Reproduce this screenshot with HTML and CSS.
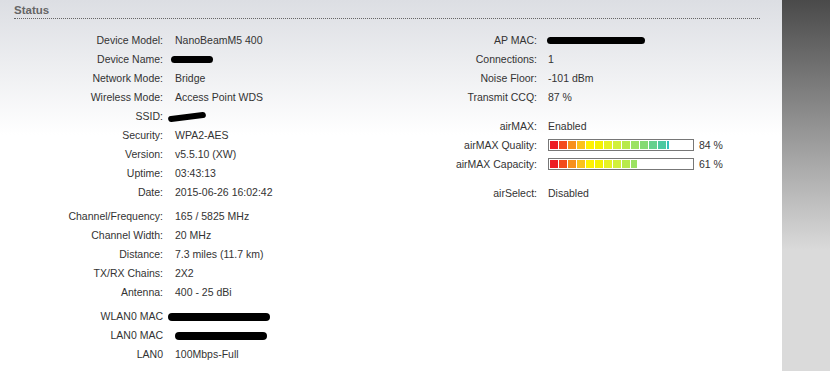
FILE: index.html
```html
<!DOCTYPE html>
<html lang="en">
<head>
<meta charset="utf-8">
<title>Status</title>
<link rel="stylesheet" href="styles.css">
</head>
<body>
<div class="page">
  <main class="main">
    <h2 class="title">Status</h2>
    <div class="cols">
      <div class="col col-left">
        <dl class="group">
          <dt>Device Model:</dt><dd>NanoBeamM5 400</dd>
          <dt>Device Name:</dt><dd><span class="redact redact-name"></span></dd>
          <dt>Network Mode:</dt><dd>Bridge</dd>
          <dt>Wireless Mode:</dt><dd>Access Point WDS</dd>
          <dt>SSID:</dt><dd><span class="redact redact-ssid"></span></dd>
          <dt>Security:</dt><dd>WPA2-AES</dd>
          <dt>Version:</dt><dd>v5.5.10 (XW)</dd>
          <dt>Uptime:</dt><dd>03:43:13</dd>
          <dt>Date:</dt><dd>2015-06-26 16:02:42</dd>
        </dl>
        <dl class="group">
          <dt>Channel/Frequency:</dt><dd>165 / 5825 MHz</dd>
          <dt>Channel Width:</dt><dd>20 MHz</dd>
          <dt>Distance:</dt><dd>7.3 miles (11.7 km)</dd>
          <dt>TX/RX Chains:</dt><dd>2X2</dd>
          <dt>Antenna:</dt><dd>400 - 25 dBi</dd>
        </dl>
        <dl class="group">
          <dt>WLAN0 MAC</dt><dd><span class="redact redact-wlan"></span></dd>
          <dt>LAN0 MAC</dt><dd><span class="redact redact-lan"></span></dd>
          <dt>LAN0</dt><dd>100Mbps-Full</dd>
        </dl>
      </div>
      <div class="col col-right">
        <dl class="group">
          <dt>AP MAC:</dt><dd><span class="redact redact-apmac"></span></dd>
          <dt>Connections:</dt><dd>1</dd>
          <dt>Noise Floor:</dt><dd>-101 dBm</dd>
          <dt>Transmit CCQ:</dt><dd>87 %</dd>
        </dl>
        <dl class="group">
          <dt>airMAX:</dt><dd>Enabled</dd>
          <dt>airMAX Quality:</dt><dd><span class="meter"><span class="meter-fill" style="width:84%"></span></span>84 %</dd>
          <dt>airMAX Capacity:</dt><dd><span class="meter"><span class="meter-fill" style="width:61%"></span></span>61 %</dd>
        </dl>
        <dl class="group">
          <dt>airSelect:</dt><dd>Disabled</dd>
        </dl>
      </div>
    </div>
  </main>
  <aside class="side"></aside>
</div>
</body>
</html>
```
FILE: styles.css
```css
html, body {
  margin: 0;
  height: 100%;
}

body {
  font-family: "Liberation Sans", Arial, sans-serif;
  font-size: 10.5px;
  color: #333;
}

.page {
  display: flex;
  min-height: 100vh;
}

.main {
  flex: 1;
  padding-left: 14px;
  background: linear-gradient(#dcdee3 0, #ffffff 135px);
}

.side {
  width: 48px;
  flex-shrink: 0;
  background: linear-gradient(#4a4a4a 0, #dadada 250px, #dadada 100%);
}

.title {
  margin: 0;
  width: 746px;
  padding-top: 3px;
  font-size: 11.5px;
  line-height: 15px;
  font-weight: bold;
  color: #666;
  border-bottom: 1px dotted #666;
}

.cols {
  display: grid;
  grid-template-columns: 374px 1fr;
  margin-top: 12px;
}

.group {
  display: grid;
  grid-template-columns: 149px auto;
  justify-content: start;
  column-gap: 12px;
  margin: 0;
  line-height: 19px;
}

.group + .group {
  margin-top: 5px;
}

.col-right .group {
  column-gap: 11px;
}

.col-right .group + .group {
  margin-top: 10px;
}

dt {
  text-align: right;
  white-space: nowrap;
}

dd {
  margin: 0;
  white-space: nowrap;
}

.redact {
  display: inline-block;
  vertical-align: middle;
  background: #000;
  border-radius: 4px;
  height: 7px;
}

.redact-name {
  width: 42px;
  margin-left: -4px;
  margin-top: -2px;
}

.redact-ssid {
  width: 38px;
  height: 6px;
  margin-left: -7px;
  transform: rotate(-7deg);
}

.redact-apmac {
  width: 98px;
  margin-left: -1px;
  margin-top: -2px;
}

.redact-wlan {
  width: 102px;
  height: 8px;
  margin-left: -7px;
}

.redact-lan {
  width: 92px;
  height: 8px;
}

.meter {
  display: inline-block;
  vertical-align: middle;
  box-sizing: content-box;
  width: 142px;
  height: 8px;
  padding: 1px;
  border: 1px solid #777;
  background: #fff;
  margin-right: 5px;
  margin-top: -2px;
}

.meter-fill {
  display: block;
  height: 100%;
  background:
    repeating-linear-gradient(to right, transparent 0 8px, #fff 8px 9px),
    linear-gradient(to right,
      #ed1c24 0 9px,
      #f34b1c 9px 18px,
      #f7901a 18px 27px,
      #fbc21a 27px 36px,
      #fff200 36px 45px,
      #f5f200 45px 54px,
      #e6f222 54px 63px,
      #d2f03a 63px 72px,
      #b8ea4a 72px 81px,
      #9ce262 81px 90px,
      #84da74 90px 99px,
      #66d08c 99px 108px,
      #4cc8a0 108px 117px,
      #34c0bc 117px 126px,
      #28b0d0 126px 135px,
      #2090e0 135px 144px);
  background-size: 144px 100%, 144px 100%;
  background-repeat: no-repeat;
}
```
